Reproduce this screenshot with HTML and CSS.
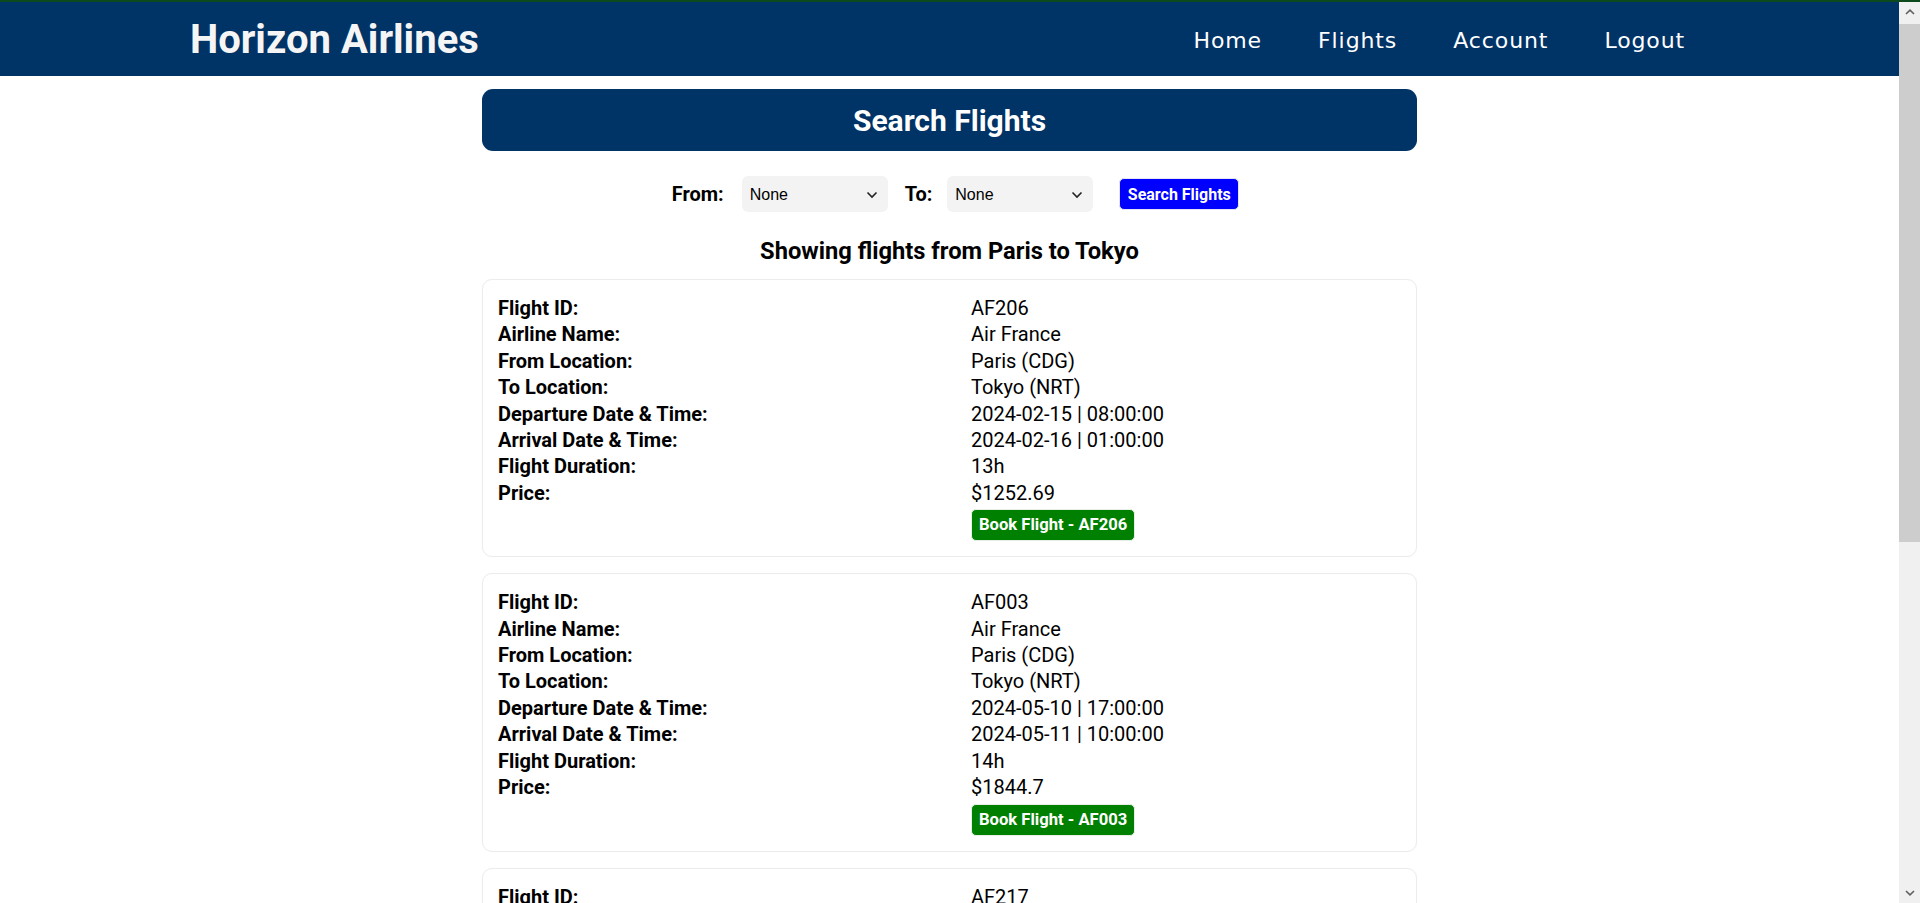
FILE: index.html
```html
<!DOCTYPE html>
<html lang="en">
<head>
<meta charset="utf-8">
<title>Horizon Airlines - Search Flights</title>
<link rel="stylesheet" href="styles.css">
</head>
<body>
<div class="topline"></div>
<header class="navbar">
  <div class="brand">Horizon Airlines</div>
  <nav class="nav-links">
    <a href="#">Home</a>
    <a href="#">Flights</a>
    <a href="#">Account</a>
    <a href="#">Logout</a>
  </nav>
</header>

<main class="main">
  <h1 class="search-header">Search Flights</h1>

  <form class="search-form">
    <label class="form-label from-label">From:</label>
    <div class="select-wrap">
      <select class="select"><option>None</option></select>
      <svg class="chevron" width="12" height="8" viewBox="0 0 12 8"><path d="M1.5 1.5 L6 6 L10.5 1.5" fill="none" stroke="#222" stroke-width="1.6"/></svg>
    </div>
    <label class="form-label to-label">To:</label>
    <div class="select-wrap">
      <select class="select"><option>None</option></select>
      <svg class="chevron" width="12" height="8" viewBox="0 0 12 8"><path d="M1.5 1.5 L6 6 L10.5 1.5" fill="none" stroke="#222" stroke-width="1.6"/></svg>
    </div>
    <button type="button" class="search-btn">Search Flights</button>
  </form>

  <h3 class="results-title">Showing flights from Paris to Tokyo</h3>

  <div class="cards">
    <div class="card">
      <div class="row"><span class="label">Flight ID:</span><span class="value">AF206</span></div>
      <div class="row"><span class="label">Airline Name:</span><span class="value">Air France</span></div>
      <div class="row"><span class="label">From Location:</span><span class="value">Paris (CDG)</span></div>
      <div class="row"><span class="label">To Location:</span><span class="value">Tokyo (NRT)</span></div>
      <div class="row"><span class="label">Departure Date &amp; Time:</span><span class="value">2024-02-15 | 08:00:00</span></div>
      <div class="row"><span class="label">Arrival Date &amp; Time:</span><span class="value">2024-02-16 | 01:00:00</span></div>
      <div class="row"><span class="label">Flight Duration:</span><span class="value">13h</span></div>
      <div class="row"><span class="label">Price:</span><span class="value">$1252.69</span></div>
      <div class="row"><span></span><span class="value"><button type="button" class="book-btn">Book Flight - AF206</button></span></div>
    </div>

    <div class="card">
      <div class="row"><span class="label">Flight ID:</span><span class="value">AF003</span></div>
      <div class="row"><span class="label">Airline Name:</span><span class="value">Air France</span></div>
      <div class="row"><span class="label">From Location:</span><span class="value">Paris (CDG)</span></div>
      <div class="row"><span class="label">To Location:</span><span class="value">Tokyo (NRT)</span></div>
      <div class="row"><span class="label">Departure Date &amp; Time:</span><span class="value">2024-05-10 | 17:00:00</span></div>
      <div class="row"><span class="label">Arrival Date &amp; Time:</span><span class="value">2024-05-11 | 10:00:00</span></div>
      <div class="row"><span class="label">Flight Duration:</span><span class="value">14h</span></div>
      <div class="row"><span class="label">Price:</span><span class="value">$1844.7</span></div>
      <div class="row"><span></span><span class="value"><button type="button" class="book-btn">Book Flight - AF003</button></span></div>
    </div>

    <div class="card">
      <div class="row"><span class="label">Flight ID:</span><span class="value">AF217</span></div>
      <div class="row"><span class="label">Airline Name:</span><span class="value">Air France</span></div>
      <div class="row"><span class="label">From Location:</span><span class="value">Paris (CDG)</span></div>
      <div class="row"><span class="label">To Location:</span><span class="value">Tokyo (NRT)</span></div>
      <div class="row"><span class="label">Departure Date &amp; Time:</span><span class="value">2024-07-22 | 11:30:00</span></div>
      <div class="row"><span class="label">Arrival Date &amp; Time:</span><span class="value">2024-07-23 | 04:30:00</span></div>
      <div class="row"><span class="label">Flight Duration:</span><span class="value">13h</span></div>
      <div class="row"><span class="label">Price:</span><span class="value">$1399.5</span></div>
      <div class="row"><span></span><span class="value"><button type="button" class="book-btn">Book Flight - AF217</button></span></div>
    </div>

    <div class="card">
      <div class="row"><span class="label">Flight ID:</span><span class="value">AF274</span></div>
      <div class="row"><span class="label">Airline Name:</span><span class="value">Air France</span></div>
      <div class="row"><span class="label">From Location:</span><span class="value">Paris (CDG)</span></div>
      <div class="row"><span class="label">To Location:</span><span class="value">Tokyo (NRT)</span></div>
      <div class="row"><span class="label">Departure Date &amp; Time:</span><span class="value">2024-08-05 | 13:00:00</span></div>
      <div class="row"><span class="label">Arrival Date &amp; Time:</span><span class="value">2024-08-06 | 07:00:00</span></div>
      <div class="row"><span class="label">Flight Duration:</span><span class="value">14h</span></div>
      <div class="row"><span class="label">Price:</span><span class="value">$1567.3</span></div>
      <div class="row"><span></span><span class="value"><button type="button" class="book-btn">Book Flight - AF274</button></span></div>
    </div>
  </div>
</main>

<div class="fake-scrollbar" aria-hidden="true">
  <div class="sb-button">
    <svg width="10" height="6" viewBox="0 0 10 6"><path d="M1 5 L5 1.2 L9 5" fill="none" stroke="#606060" stroke-width="1.6"/></svg>
  </div>
  <div class="sb-thumb"></div>
  <div class="sb-space"></div>
  <div class="sb-button">
    <svg width="10" height="6" viewBox="0 0 10 6"><path d="M1 1 L5 4.8 L9 1" fill="none" stroke="#606060" stroke-width="1.6"/></svg>
  </div>
</div>
</body>
</html>
```

FILE: styles.css
```css
html {
  background: #ffffff;
}

body {
  margin: 0;
  padding-right: 21px;
  font-family: Roboto, "Liberation Sans", Arial, sans-serif;
  color: #000000;
  background: #ffffff;
}

.topline {
  height: 2px;
  margin-right: -21px;
  background: #0c4a1e;
}

.navbar {
  height: 74px;
  background: #003366;
  display: flex;
  align-items: center;
  justify-content: space-between;
  padding: 0 10%;
}

.brand {
  font-family: Roboto, "Liberation Sans", sans-serif;
  font-weight: 700;
  font-size: 40px;
  color: #f5f5f5;
  line-height: 1;
  margin-top: 2px;
}

.nav-links {
  display: flex;
  align-items: center;
  margin-right: -4px;
}

.nav-links a {
  font-family: "DejaVu Sans", "Open Sans", sans-serif;
  font-size: 22px;
  letter-spacing: 0.9px;
  color: #ffffff;
  text-decoration: none;
  padding: 0 28px;
  line-height: 1;
  margin-top: 4px;
}

.main {
  width: 935px;
  margin: 0 auto;
  padding-bottom: 60px;
}

.search-header {
  margin: 13px 0 0;
  height: 62px;
  background: #003366;
  border-radius: 11px;
  color: #ffffff;
  font-size: 30px;
  font-weight: 700;
  display: flex;
  align-items: center;
  justify-content: center;
}

.search-form {
  margin-top: 25px;
  height: 36px;
  padding-left: 12px;
  display: flex;
  align-items: center;
  justify-content: center;
}

.form-label {
  font-weight: 700;
  font-size: 20px;
}

.from-label {
  margin-right: 18px;
}

.to-label {
  margin: 0 15px 0 17px;
}

.select-wrap {
  position: relative;
  width: 146px;
  height: 36px;
}

.select {
  appearance: none;
  -webkit-appearance: none;
  width: 100%;
  height: 100%;
  border: none;
  border-radius: 6px;
  background: #f3f3f3;
  font-family: "Liberation Sans", Arial, sans-serif;
  font-size: 16px;
  color: #000000;
  padding: 0 8px;
  outline: none;
}

.chevron {
  position: absolute;
  right: 10px;
  top: 15px;
  pointer-events: none;
}

.search-btn {
  margin: 0 0 0 26px;
  width: 120px;
  height: 32px;
  background: #0000ff;
  color: #ffffff;
  border: 1px solid #e4e4f4;
  border-radius: 5px;
  font-family: Roboto, sans-serif;
  font-weight: 700;
  font-size: 16px;
  padding: 0;
}

.results-title {
  margin: 27px 0 16px;
  text-align: center;
  font-size: 23.7px;
  font-weight: 700;
  line-height: 24px;
}

.cards {
  display: flex;
  flex-direction: column;
  gap: 16px;
}

.card {
  border: 1px solid #ececec;
  box-shadow: 0 0 1px rgba(0, 0, 0, 0.06);
  border-radius: 10px;
  padding: 15px;
}

.row {
  display: grid;
  grid-template-columns: 473px 1fr;
  font-size: 20px;
  line-height: 26.4px;
}

.label {
  font-weight: 700;
}

.value {
  font-weight: 400;
}

.book-btn {
  margin-top: 3px;
  height: 32px;
  padding: 0 7px;
  background: #008000;
  color: #ffffff;
  border: 1px solid #e6efe6;
  border-radius: 5px;
  font-family: Roboto, sans-serif;
  font-weight: 700;
  font-size: 16.6px;
  line-height: 30px;
  vertical-align: top;
}

.fake-scrollbar {
  position: fixed;
  top: 2px;
  right: 0;
  bottom: 0;
  width: 21px;
  background: #f0f0f0;
  display: flex;
  flex-direction: column;
}

.sb-button {
  height: 20px;
  display: flex;
  align-items: center;
  justify-content: center;
}

.sb-thumb {
  height: 518px;
  margin: 2px 0 0;
  background: #cdcdcd;
}

.sb-space {
  flex: 1;
}
```
